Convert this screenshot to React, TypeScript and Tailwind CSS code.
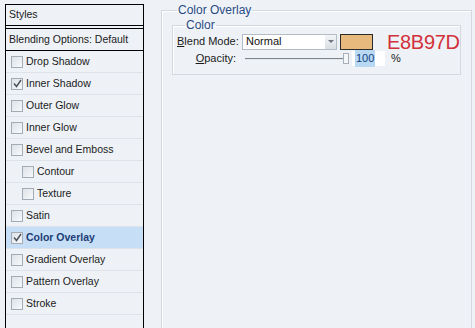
import React from "react";

type Item = { label: string; checked?: boolean; indent?: boolean; selected?: boolean };

const items: Item[] = [
  { label: "Drop Shadow" },
  { label: "Inner Shadow", checked: true },
  { label: "Outer Glow" },
  { label: "Inner Glow" },
  { label: "Bevel and Emboss" },
  { label: "Contour", indent: true },
  { label: "Texture", indent: true },
  { label: "Satin" },
  { label: "Color Overlay", checked: true, selected: true },
  { label: "Gradient Overlay" },
  { label: "Pattern Overlay" },
  { label: "Stroke" },
];

function Check({ checked }: { checked?: boolean }) {
  return (
    <span className="flex h-[12px] w-[12px] shrink-0 items-center justify-center border border-[#a3abb4] bg-gradient-to-br from-[#dde2e7] to-[#f7f9fb]">
      {checked ? (
        <svg width="9" height="9" viewBox="0 0 9 9" aria-hidden="true">
          <path d="M1 4.5 L3.5 7.5 L8 1" fill="none" stroke="#4a4f5a" strokeWidth="1.4" />
        </svg>
      ) : null}
    </span>
  );
}

function StyleRow({ item }: { item: Item }) {
  return (
    <div
      className={
        "flex h-[22px] items-center gap-[2px] border-b border-[#dde3e9] " +
        (item.indent ? "pl-[16px] " : "pl-[5px] ") +
        (item.selected ? "bg-[#c6def6] font-bold text-[#1d3c74]" : "text-[#1b1b1b]")
      }
    >
      <Check checked={item.checked} />
      <span className="pl-[1px]">{item.label}</span>
    </div>
  );
}

export default function App() {
  return (
    <div
      className="flex h-[328px] w-[475px] overflow-hidden bg-[#eef2f6] text-[11px]"
      style={{ fontFamily: '"Liberation Sans", Arial, sans-serif' }}
    >
      {/* layer style list */}
      <div className="ml-[5px] mt-[4px] flex h-[330px] w-[139px] shrink-0 flex-col border-x border-t border-black text-[10.5px]">
        <div className="flex h-[21px] items-center border-b border-black pl-[3px] text-[#1b1b1b]">Styles</div>
        <div className="h-[2px]" />
        <div className="flex h-[23px] items-center border-y border-black pl-[3px] text-[#1b1b1b]">
          Blending Options: Default
        </div>
        {items.map((it) => (
          <StyleRow key={it.label} item={it} />
        ))}
      </div>

      {/* options panel */}
      <fieldset className="ml-[17px] mt-[4px] h-[340px] w-[307px] shrink-0 border border-[#d3d9df] px-[10px] shadow-[inset_1px_1px_0_#ffffff]">
        <legend className="ml-[5px] px-[1px] text-[12px] leading-[13px] text-[#2a4a85]">Color Overlay</legend>
        <fieldset className="mt-[2px] h-[56px] w-[289px] border border-[#d3d9df] shadow-[inset_1px_1px_0_#ffffff]">
          <legend className="ml-[12px] px-[1px] text-[12px] leading-[13px] text-[#2a4a85]">Color</legend>
          <div className="mt-[1px] flex h-[17px] items-center whitespace-nowrap">
            <span className="w-[65px] shrink-0 pl-[4px] text-[#1b1b1b]">
              <span className="underline">B</span>lend Mode:
            </span>
            <div className="ml-[4px] flex h-[16px] w-[95px] shrink-0 items-center justify-between border border-[#b4bcc5] bg-white pl-[3px]">
              <span className="text-[#111]">Normal</span>
              <span className="flex h-[14px] w-[11px] items-center justify-center bg-gradient-to-b from-[#f3f5f7] to-[#d9dee3]">
                <svg width="6" height="4" viewBox="0 0 6 4" aria-hidden="true">
                  <path d="M0 0 H6 L3 3 Z" fill="#6b7480" />
                </svg>
              </span>
            </div>
            <div className="ml-[3px] h-[16px] w-[33px] shrink-0 border border-[#2b2b2b] bg-[#E8B97D]" />
            <span className="ml-[14px] text-[20px] leading-none tracking-[-0.3px] text-[#d2313b]">E8B97D</span>
          </div>
          <div className="mt-[1px] flex h-[15px] items-center whitespace-nowrap">
            <span className="w-[65px] shrink-0 pr-[2px] text-right text-[#1b1b1b]">
              <span className="underline">O</span>pacity:
            </span>
            <div className="ml-[7px] flex items-center">
              <div className="h-[2px] w-[98px] border-t border-[#7d848c] bg-[#e4e8ec]" />
              <div className="h-[11px] w-[6px] border border-[#a8b0b9] bg-[#f4f6f8]" />
            </div>
            <div className="ml-[3px] flex h-[15px] w-[33px] items-center bg-white pl-[3px]">
              <span className="bg-[#b8d8f3] px-[1px] text-[#12407e]">100</span>
            </div>
            <span className="ml-[6px] text-[#1b1b1b]">%</span>
          </div>
        </fieldset>
      </fieldset>
    </div>
  );
}
